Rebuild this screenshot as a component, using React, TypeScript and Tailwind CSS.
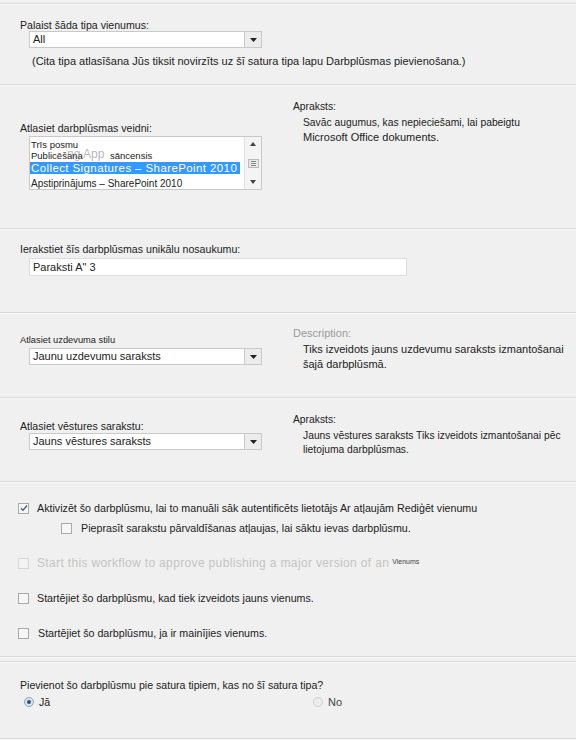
import React from 'react';

const font = { fontFamily: '"Liberation Sans", Arial, sans-serif' };

function Divider() {
  return <div className="h-[2px] border-t border-[#d8d8d8] bg-[#fafafa]" />;
}

function Caret() {
  return (
    <div className="w-[17px] h-full border-l border-[#c8c8c8] bg-[#ececec] flex items-center justify-center">
      <svg width="7" height="4" viewBox="0 0 7 4">
        <path d="M0 0h7L3.5 4z" fill="#222" />
      </svg>
    </div>
  );
}

function Dropdown({ value, text = 'text-[11px]' }: { value: string; text?: string }) {
  return (
    <div className="w-[233px] h-[17px] bg-white border border-[#c9c9c9] flex items-stretch">
      <div className={`flex-1 pl-[3px] leading-[15px] text-[#222] ${text}`}>{value}</div>
      <Caret />
    </div>
  );
}

function Check({ checked = false, disabled = false }: { checked?: boolean; disabled?: boolean }) {
  return (
    <div
      className={`w-[11px] h-[11px] border flex items-center justify-center shrink-0 ${
        disabled ? 'border-[#d6d6d6] bg-[#f3f3f3]' : 'border-[#a9a9a9] bg-[#f6f6f6]'
      }`}
    >
      {checked && (
        <svg width="8" height="8" viewBox="0 0 8 8">
          <path d="M1 4.2l2 2L7 1.5" stroke="#4a5a7a" strokeWidth="1.3" fill="none" />
        </svg>
      )}
    </div>
  );
}

function Radio({ checked = false, faded = false }: { checked?: boolean; faded?: boolean }) {
  return (
    <div
      className={`w-[10px] h-[10px] rounded-full border flex items-center justify-center ${
        faded ? 'border-[#cfcfcf] bg-[#ececec]' : 'border-[#8aa0c0] bg-[#dbe6f3]'
      }`}
    >
      {checked && <div className="w-[4px] h-[4px] rounded-full bg-[#2b4f80]" />}
    </div>
  );
}

export default function App() {
  return (
    <div className="w-[576px] h-[740px] bg-[#f0f0f0] text-[#222] overflow-hidden" style={font}>
      <div className="h-[3px]" />
      <Divider />

      {/* Run on items of this type */}
      <div className="h-[79px] pl-[20px] pt-[14px]">
        <div className="text-[10.6px] leading-[12px]">Palaist šāda tipa vienumus:</div>
        <div className="pl-[9px]">
          <Dropdown value="All" />
        </div>
        <div className="pl-[12px] pt-[7px] text-[11px] leading-[12px]">
          (Cita tipa atlasīšana Jūs tiksit novirzīts uz šī satura tipa lapu Darbplūsmas pievienošana.)
        </div>
      </div>
      <Divider />

      {/* Template */}
      <div className="h-[142px] flex">
        <div className="w-[293px] pl-[20px] pt-[36px]">
          <div className="text-[10.6px] leading-[12px]">Atlasiet darbplūsmas veidni:</div>
          <div className="ml-[9px] mt-[2px] w-[233px] h-[54px] bg-white border border-[#c9c9c9] flex overflow-hidden">
            <div className="flex-1 pt-[2px] text-[9.5px] leading-[11px] whitespace-nowrap overflow-hidden">
              <div className="pl-[1px]">Trīs posmu</div>
              <div className="pl-[1px] relative h-[11px]">
                <span>Publicēšana</span>
                <span className="absolute left-[37px] top-[-2px] text-[12px] leading-[12px] text-[#8a8a8a] opacity-60">
                  ng App
                </span>
                <span className="absolute left-[80px] top-0">sāncensis</span>
              </div>
              <div className="mt-[1px] bg-[#3399ff] text-white text-[11.5px] tracking-[0.4px] leading-[12px] pl-[1px] w-[210px]">
                Collect Signatures – SharePoint 2010
              </div>
              <div className="pl-[1px] pt-[4px] text-[10px]">Apstiprinājums – SharePoint 2010</div>
            </div>
            <div className="w-[17px] shrink-0 border-l border-[#e0e0e0] bg-[#f4f4f4] flex flex-col items-center justify-between py-[5px]">
              <svg width="6" height="4" viewBox="0 0 6 4">
                <path d="M0 4h6L3 0z" fill="#444" />
              </svg>
              <div className="w-[11px] h-[9px] border border-[#bbb] bg-[#e8e8e8] flex flex-col justify-center items-center gap-[1px]">
                <div className="w-[5px] h-px bg-[#888]" />
                <div className="w-[5px] h-px bg-[#888]" />
                <div className="w-[5px] h-px bg-[#888]" />
              </div>
              <svg width="6" height="4" viewBox="0 0 6 4">
                <path d="M0 0h6L3 4z" fill="#444" />
              </svg>
            </div>
          </div>
        </div>
        <div className="flex-1 pt-[14px] text-[10.3px] leading-[14px]">
          <div>Apraksts:</div>
          <div className="pl-[10px] pt-[2px]">
            <div>Savāc augumus, kas nepieciešami, lai pabeigtu</div>
            <div className="text-[11px]">Microsoft Office dokuments.</div>
          </div>
        </div>
      </div>
      <Divider />

      {/* Name */}
      <div className="h-[82px] pl-[20px] pt-[13px]">
        <div className="text-[10.6px] leading-[12px]">Ierakstiet šīs darbplūsmas unikālu nosaukumu:</div>
        <div className="ml-[9px] mt-[3px] w-[378px] h-[18px] bg-white border border-[#dcdcdc] pl-[3px] text-[11px] leading-[16px]">
          Paraksti A" 3
        </div>
      </div>
      <Divider />

      {/* Task list */}
      <div className="h-[83px] flex">
        <div className="w-[293px] pl-[20px] pt-[21px]">
          <div className="text-[9.3px] leading-[10px]">Atlasiet uzdevuma stilu</div>
          <div className="pl-[9px] pt-[3px]">
            <Dropdown value="Jaunu uzdevumu saraksts" />
          </div>
        </div>
        <div className="flex-1 pt-[12px]">
          <div className="text-[11px] leading-[14px] text-[#9a9a9a]">Description:</div>
          <div className="pl-[10px] pt-[2px] text-[11px] leading-[15px]">
            <div>Tiks izveidots jauns uzdevumu saraksts izmantošanai</div>
            <div>šajā darbplūsmā.</div>
          </div>
        </div>
      </div>
      <Divider />

      {/* History list */}
      <div className="h-[82px] flex">
        <div className="w-[293px] pl-[20px] pt-[21px]">
          <div className="text-[10.6px] leading-[12px]">Atlasiet vēstures sarakstu:</div>
          <div className="pl-[9px] pt-[1px]">
            <Dropdown value="Jauns vēstures saraksts" />
          </div>
        </div>
        <div className="flex-1 pt-[15px] text-[10.3px]">
          <div className="leading-[12px]">Apraksts:</div>
          <div className="pl-[10px] pt-[3px] text-[10.3px] leading-[14px]">
            <div>Jauns vēstures saraksts Tiks izveidots izmantošanai pēc</div>
            <div>lietojuma darbplūsmas.</div>
          </div>
        </div>
      </div>
      <Divider />

      {/* Start options */}
      <div className="h-[173px] pl-[18px] pt-[19px] text-[10.7px] leading-[12px] flex flex-col">
        <div className="flex items-center gap-[8px]">
          <Check checked />
          <span>Aktivizēt šo darbplūsmu, lai to manuāli sāk autentificēts lietotājs Ar atļaujām Rediģēt vienumu</span>
        </div>
        <div className="flex items-center gap-[9px] pl-[43px] pt-[8px]">
          <Check />
          <span>Pieprasīt sarakstu pārvaldīšanas atļaujas, lai sāktu ievas darbplūsmu.</span>
        </div>
        <div className="flex items-center gap-[8px] pt-[23px]">
          <Check disabled />
          <span className="text-[12px] text-[#c4c4c4] tracking-[0.35px]">
            Start this workflow to approve publishing a major version of an
          </span>
          <span className="text-[7px] text-[#444] -ml-[5px] -mt-[3px]">Vienums</span>
        </div>
        <div className="flex items-center gap-[8px] pt-[23px]">
          <Check />
          <span>Startējiet šo darbplūsmu, kad tiek izveidots jauns vienums.</span>
        </div>
        <div className="flex items-center gap-[9px] pt-[23px]">
          <Check />
          <span>Startējiet šo darbplūsmu, ja ir mainījies vienums.</span>
        </div>
      </div>
      <Divider />
      <div className="h-[3px]" />
      <Divider />

      {/* Add to content types */}
      <div className="h-[75px] pl-[20px] pt-[16px] text-[10.6px] leading-[12px]">
        <div>Pievienot šo darbplūsmu pie satura tipiem, kas no šī satura tipa?</div>
        <div className="flex items-center pt-[5px]">
          <div className="flex items-center gap-[5px] pl-[4px] w-[293px]">
            <Radio checked />
            <span>Jā</span>
          </div>
          <div className="flex items-center gap-[5px] text-[11px] text-[#444]">
            <Radio faded />
            <span>No</span>
          </div>
        </div>
      </div>
      <Divider />
    </div>
  );
}
